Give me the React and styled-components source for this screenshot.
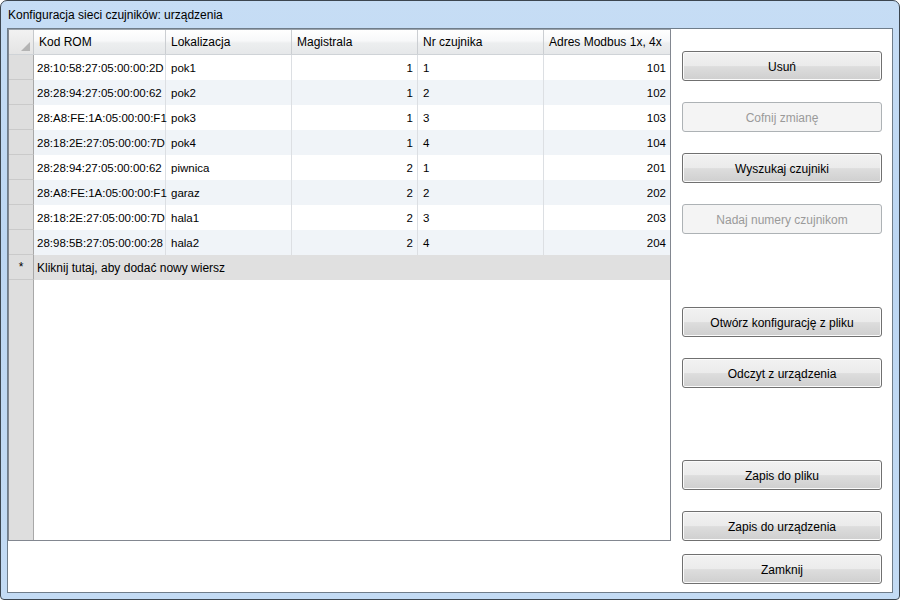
import React from 'react';
import styled, { createGlobalStyle } from 'styled-components';

const rows = [
  ['28:10:58:27:05:00:00:2D', 'pok1', 1, 1, 101],
  ['28:28:94:27:05:00:00:62', 'pok2', 1, 2, 102],
  ['28:A8:FE:1A:05:00:00:F1', 'pok3', 1, 3, 103],
  ['28:18:2E:27:05:00:00:7D', 'pok4', 1, 4, 104],
  ['28:28:94:27:05:00:00:62', 'piwnica', 2, 1, 201],
  ['28:A8:FE:1A:05:00:00:F1', 'garaz', 2, 2, 202],
  ['28:18:2E:27:05:00:00:7D', 'hala1', 2, 3, 203],
  ['28:98:5B:27:05:00:00:28', 'hala2', 2, 4, 204],
]

const columns = [
  { title: 'Kod ROM', align: 'left' },
  { title: 'Lokalizacja', align: 'left' },
  { title: 'Magistrala', align: 'right' },
  { title: 'Nr czujnika', align: 'left' },
  { title: 'Adres Modbus 1x, 4x', align: 'right' },
]

const buttons = [
  { label: 'Usuń', gap: 0 },
  { label: 'Cofnij zmianę', gap: 21, disabled: true },
  { label: 'Wyszukaj czujniki', gap: 21 },
  { label: 'Nadaj numery czujnikom', gap: 21, disabled: true },
  { label: 'Otwórz konfigurację z pliku', gap: 73 },
  { label: 'Odczyt z urządzenia', gap: 21 },
  { label: 'Zapis do pliku', gap: 72 },
  { label: 'Zapis do urządzenia', gap: 21 },
  { label: 'Zamknij', gap: 13 },
]

const App = () => (
  <>
    <GlobalStyle />
    <Window>
      <TitleBar>Konfiguracja sieci czujników: urządzenia</TitleBar>
      <Client>
        <Table>
          <Row $header>
            <Corner><CornerMark /></Corner>
            {columns.map((col) => (
              <HeaderCell key={col.title}>{col.title}</HeaderCell>
            ))}
          </Row>
          {rows.map((row, i) => (
            <Row key={i} $alt={i % 2 === 1}>
              <RowHead />
              {row.map((value, j) => (
                <Cell key={j} $align={columns[j].align}>{value}</Cell>
              ))}
            </Row>
          ))}
          <NewRow>
            <RowHead>*</RowHead>
            <NewRowText>Kliknij tutaj, aby dodać nowy wiersz</NewRowText>
          </NewRow>
          <Filler>
            <RowStrip />
          </Filler>
        </Table>
        <ButtonColumn>
          {buttons.map((b) => (
            <Button key={b.label} type="button" $gap={b.gap} disabled={b.disabled}>
              {b.label}
            </Button>
          ))}
        </ButtonColumn>
      </Client>
    </Window>
  </>
)

export default App

// Styled components
const GlobalStyle = createGlobalStyle`
  html, body {
    margin: 0;
    padding: 0;
    background: #ffffff;
  }
  body {
    font-family: 'Liberation Sans', Arial, sans-serif;
    font-size: 12px;
    color: #000;
  }
  * {
    box-sizing: border-box;
  }
`

const Window = styled.div`
  width: 900px;
  height: 600px;
  border: 1px solid #3c4650;
  border-radius: 7px 7px 4px 4px;
  background: linear-gradient(180deg, #c6ddf5 0%, #bcd6f2 40%, #c3dbf4 100%);
  padding: 0 6px 6px 6px;
  display: flex;
  flex-direction: column;
  overflow: hidden;
`

const TitleBar = styled.div`
  height: 27px;
  display: flex;
  align-items: center;
  padding-left: 1px;
  padding-top: 1px;
  font-size: 12px;
  color: #000;
`

const Client = styled.div`
  flex: 1;
  border: 1px solid #6f7d8a;
  background: #ffffff;
  display: flex;
  align-items: flex-start;
`

const gridColumns = '25px 132px 126px 126px 126px 126px'

const Table = styled.div`
  width: 663px;
  height: 512px;
  border: 1px solid #828790;
  border-top-color: #9ba3ab;
  display: flex;
  flex-direction: column;
  background: #ffffff;
  font-size: 11.5px;
`

const Row = styled.div`
  display: grid;
  grid-template-columns: ${gridColumns};
  height: ${(p) => (p.$header ? '24px' : '25px')};
  background: ${(p) => (p.$alt ? '#f0f4f8' : '#ffffff')};
  ${(p) => p.$header && `
    background: linear-gradient(180deg, #ffffff 0%, #f7f8f9 45%, #eceeef 55%, #e6e8ea 100%);
    border-bottom: 1px solid #cfd3d7;
    height: 25px;
  `}
`

const Corner = styled.div`
  position: relative;
  border-right: 1px solid #c6c9cc;
  background: linear-gradient(180deg, #f2f2f2 0%, #e4e4e4 100%);
`

const CornerMark = styled.div`
  position: absolute;
  right: 3px;
  bottom: 3px;
  width: 0;
  height: 0;
  border-left: 9px solid transparent;
  border-bottom: 9px solid #b4b4b4;
`

const HeaderCell = styled.div`
  display: flex;
  align-items: center;
  padding-left: 5px;
  border-right: 1px solid #cbced2;
  white-space: nowrap;
  font-size: 12px;
  &:last-child {
    border-right: none;
  }
`

const RowHead = styled.div`
  background: #dedede;
  border-right: 1px solid #a8a8a8;
  border-bottom: 1px solid #cacaca;
  display: flex;
  align-items: center;
  justify-content: center;
  font-size: 12px;
`

const Cell = styled.div`
  display: flex;
  align-items: center;
  justify-content: ${(p) => (p.$align === 'right' ? 'flex-end' : 'flex-start')};
  padding: 0 4px 0 5px;
  border-right: 1px solid #dcdfe3;
  white-space: nowrap;
  &:nth-child(2) {
    padding-left: 3px;
  }
  &:last-child {
    border-right: none;
  }
`

const NewRow = styled.div`
  display: grid;
  grid-template-columns: 25px 1fr;
  height: 25px;
  background: #e0e0e0;
`

const NewRowText = styled.div`
  display: flex;
  align-items: center;
  padding-left: 3px;
  font-size: 12px;
`

const Filler = styled.div`
  flex: 1;
  display: grid;
  grid-template-columns: 25px 1fr;
`

const RowStrip = styled.div`
  background: #dedede;
  border-right: 1px solid #a8a8a8;
`

const ButtonColumn = styled.div`
  display: flex;
  flex-direction: column;
  padding: 22px 0 0 11px;
`

const Button = styled.button`
  width: 200px;
  height: 30px;
  margin-top: ${(p) => p.$gap}px;
  padding: 1px 0 0 0;
  border: 1px solid #707070;
  border-radius: 3px;
  background: linear-gradient(180deg, #f2f2f2 0%, #ebebeb 50%, #dddddd 52%, #cfcfcf 100%);
  box-shadow: inset 0 0 0 1px #fbfbfb;
  font-family: 'Liberation Sans', Arial, sans-serif;
  font-size: 12px;
  color: #000;
  &:disabled {
    border-color: #adb2b5;
    background: #f4f4f4;
    box-shadow: none;
    color: #9a9a9a;
  }
`
